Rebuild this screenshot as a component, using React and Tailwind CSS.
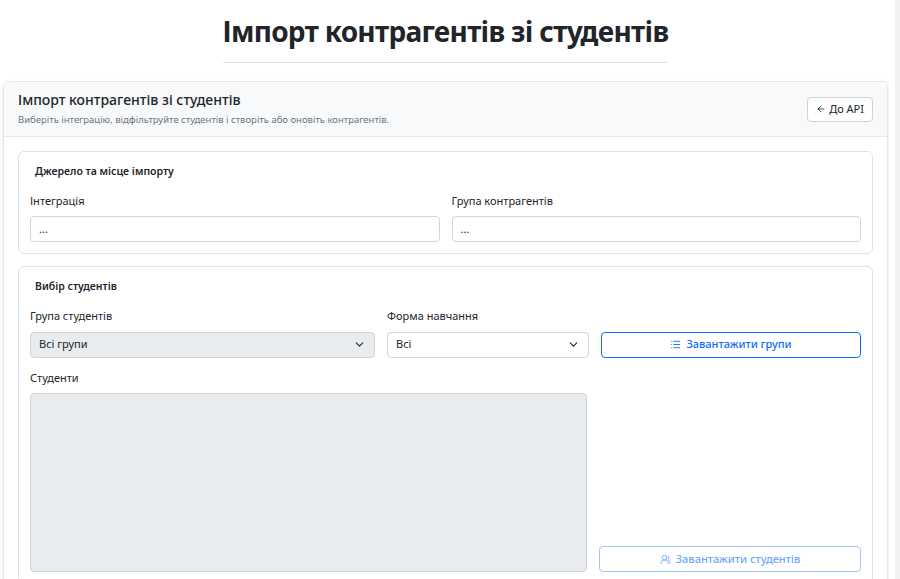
import { ArrowLeft, ChevronDown, List, UsersRound } from "lucide-react";

export default function App() {
  return (
    <div className="min-h-[579px] bg-white flex font-['Inter',sans-serif] text-[#212529]">
      <div className="flex-1 flex flex-col items-center pt-[14px] pl-[3px]">
        <h1 className="text-[28px] font-bold leading-[34px] tracking-tight">Імпорт контрагентів зі студентів</h1>
        <div className="w-[445px] h-px bg-[#dee2e6] mt-[14px] mb-[18px]" />
        <div className="w-full border border-[#e5e7eb] rounded-md shadow-sm overflow-hidden">
          <div className="bg-[#f8f9fa] border-b border-[#e5e7eb] px-[14px] h-[55px] flex items-center justify-between">
            <div>
              <div className="text-[14px] font-medium leading-[18px]">Імпорт контрагентів зі студентів</div>
              <div className="text-[9.5px] text-[#6c757d] mt-[4px]">Виберіть інтеграцію, відфільтруйте студентів і створіть або оновіть контрагентів.</div>
            </div>
            <button className="h-[25px] px-[8px] border border-[#ced4da] rounded bg-white text-[11px] flex items-center gap-[3px]">
              <ArrowLeft size={10} /> До API
            </button>
          </div>
          <div className="p-[14px] flex flex-col gap-[12px]">
            <div className="border border-[#dee2e6] rounded-md px-[11px] pt-[12px] pb-[11px]">
              <div className="text-[10.5px] font-semibold px-[5px] mb-[13px]">Джерело та місце імпорту</div>
              <div className="grid grid-cols-2 gap-[12px]">
                {["Інтеграція", "Група контрагентів"].map((l) => (
                  <div key={l}>
                    <div className="text-[11px] mb-[7px]">{l}</div>
                    <div className="h-[26px] border border-[#ced4da] rounded px-[8px] flex items-center text-[11px]">...</div>
                  </div>
                ))}
              </div>
            </div>
            <div className="border border-[#dee2e6] rounded-md px-[11px] pt-[12px] pb-[11px]">
              <div className="text-[10.5px] font-semibold px-[5px] mb-[13px]">Вибір студентів</div>
              <div className="flex gap-[12px] items-end">
                <div className="w-[345px]">
                  <div className="text-[11px] mb-[7px]">Група студентів</div>
                  <div className="h-[26px] border border-[#ced4da] rounded bg-[#e9ecef] px-[8px] flex items-center justify-between text-[11px]">
                    Всі групи <ChevronDown size={13} />
                  </div>
                </div>
                <div className="w-[202px]">
                  <div className="text-[11px] mb-[7px]">Форма навчання</div>
                  <div className="h-[26px] border border-[#ced4da] rounded px-[8px] flex items-center justify-between text-[11px]">
                    Всі <ChevronDown size={13} />
                  </div>
                </div>
                <button className="flex-1 h-[26px] border border-[#0d6efd] rounded text-[#0d6efd] text-[11px] font-medium flex items-center justify-center gap-[5px]">
                  <List size={11} /> Завантажити групи
                </button>
              </div>
              <div className="flex gap-[12px] items-end mt-[12px]">
                <div className="w-[557px]">
                  <div className="text-[11px] mb-[7px]">Студенти</div>
                  <div className="h-[179px] border border-[#ced4da] rounded bg-[#e9ecef]" />
                </div>
                <button className="flex-1 h-[26px] border border-[#9ec5fe] rounded text-[#6ea8fe] text-[11px] font-medium flex items-center justify-center gap-[5px]">
                  <UsersRound size={11} /> Завантажити студентів
                </button>
              </div>
            </div>
          </div>
        </div>
      </div>
      <div className="w-[5px] bg-[#f1f1f1] ml-[7px]" />
    </div>
  );
}
